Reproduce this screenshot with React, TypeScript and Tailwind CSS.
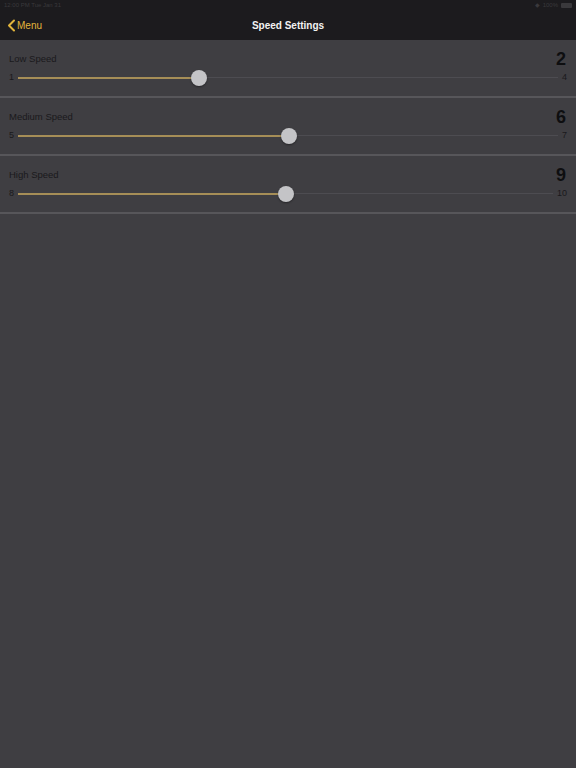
import React from 'react';

type Speed = { label: string; min: number; max: number; value: number };

const SPEEDS: Speed[] = [
  { label: 'Low Speed', min: 1, max: 4, value: 2 },
  { label: 'Medium Speed', min: 5, max: 7, value: 6 },
  { label: 'High Speed', min: 8, max: 10, value: 9 },
];

const SpeedRow: React.FC<{ speed: Speed }> = ({ speed }) => {
  const pct = ((speed.value - speed.min) / (speed.max - speed.min)) * 100;
  return (
    <div className="h-[58px] border-b-2 border-[#57565a] px-[9px] pt-[11px]">
      <div className="flex items-center justify-between h-[16px]">
        <span className="text-[9.5px] text-[#1a191c]">{speed.label}</span>
        <span className="text-[18px] font-bold text-[#0e0e10] leading-none pr-[1px]">{speed.value}</span>
      </div>
      <div className="flex items-center h-[22px]">
        <span className="text-[9px] text-[#1a191c] w-[9px]">{speed.min}</span>
        <div className="relative flex-1 h-[22px] mr-[4px]">
          <div className="absolute left-0 right-0 top-[10px] h-[1px] bg-[#4d4c51]" />
          <div
            className="absolute left-0 top-[10px] h-[2px] bg-[#a68e57]"
            style={{ width: `${pct}%` }}
          />
          <div
            className="absolute top-[3px] w-[16px] h-[16px] -ml-[7px] rounded-full bg-[#c4c4c7] shadow-[0_1px_2px_rgba(0,0,0,0.4)]"
            style={{ left: `${pct}%` }}
          />
        </div>
        <span className="text-[9px] text-[#1a191c]">{speed.max}</span>
      </div>
    </div>
  );
};

export default function App() {
  return (
    <div
      className="w-[576px] h-[768px] bg-[#3f3e42] flex flex-col"
      style={{ fontFamily: '"Liberation Sans", Arial, sans-serif' }}
    >
      {/* header with status bar */}
      <div className="h-[40px] bg-[#1c1b1e] flex flex-col">
        <div className="h-[11px] flex items-center justify-between px-[4px] text-[6px] text-[#3a393c]">
          <span>12:00 PM  Tue Jan 31</span>
          <span className="flex items-center gap-[3px]">
            <span>◆</span>
            <span>100%</span>
            <span className="w-[11px] h-[5px] bg-[#3a393c] rounded-[1px]" />
          </span>
        </div>
        <div className="relative flex-1 flex items-center justify-center">
          <div className="absolute left-[7px] top-0 bottom-0 flex items-center gap-[1px] text-[#e2b53c]">
            <svg width="9" height="13" viewBox="0 0 9 13" fill="none">
              <path d="M7 1.5L2 6.5L7 11.5" stroke="#e2b53c" strokeWidth="2" strokeLinecap="round" strokeLinejoin="round" />
            </svg>
            <span className="text-[10px]">Menu</span>
          </div>
          <span className="text-[10px] font-semibold text-[#f2f2f2]">Speed Settings</span>
        </div>
      </div>

      <div className="flex flex-col">
        {SPEEDS.map((s) => (
          <SpeedRow key={s.label} speed={s} />
        ))}
      </div>
    </div>
  );
}
